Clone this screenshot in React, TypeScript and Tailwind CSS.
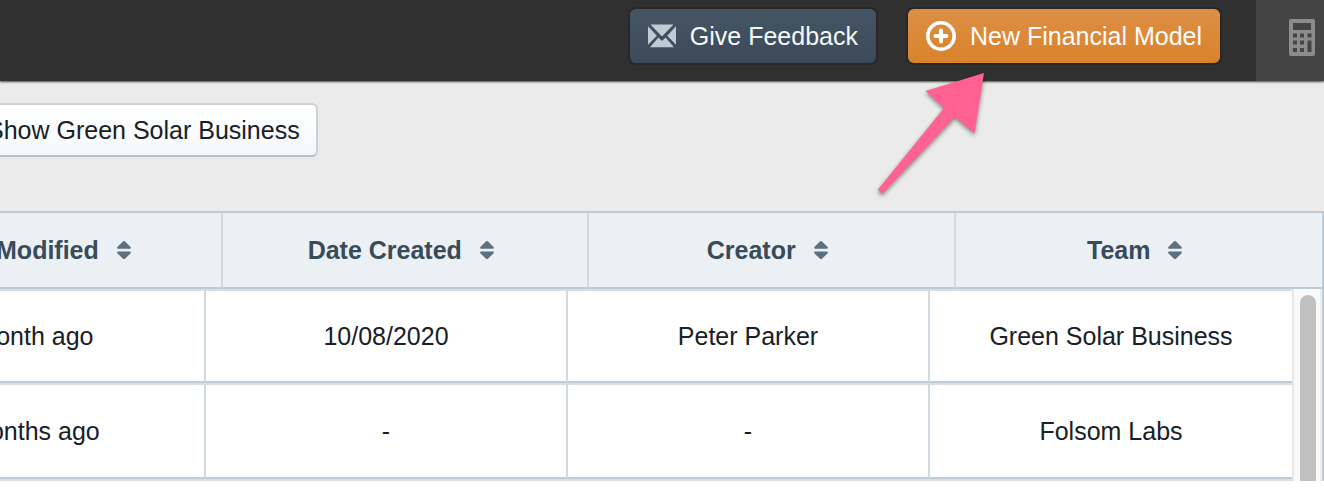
interface Model {
    modified: string;
    created: string;
    creator: string;
    team: string;
}

const columns = ["Last Modified", "Date Created", "Creator", "Team"];

const models: Model[] = [
    { modified: "a month ago", created: "10/08/2020", creator: "Peter Parker", team: "Green Solar Business" },
    { modified: "2 months ago", created: "-", creator: "-", team: "Folsom Labs" },
];

function EnvelopeIcon() {
    return (
        <svg width="28" height="24" viewBox="0 0 28 24" fill="#bfccd6" aria-hidden="true">
            <path d="M2.5 0.5h23L14 12.5z" />
            <path d="M0 2.2L8.8 11.8 0 20.8z" />
            <path d="M28 2.2L19.2 11.8 28 20.8z" />
            <path d="M10.4 13.4L14 17l3.6-3.6 8.4 9.9H2z" />
        </svg>
    );
}

function AddIcon() {
    return (
        <svg width="30" height="30" viewBox="0 0 30 30" fill="none" stroke="#fff" aria-hidden="true">
            <circle cx="15" cy="15" r="13.2" strokeWidth="3.6" />
            <path d="M15 9.5v11M9.5 15h11" strokeWidth="4" strokeLinecap="round" />
        </svg>
    );
}

function CalculatorIcon() {
    return (
        <svg width="26" height="37" viewBox="0 0 26 37" aria-hidden="true">
            <rect width="26" height="37" rx="2" fill="#8c8c8c" />
            <g fill="#444">
                <rect x="4" y="4" width="18" height="7" />
                <rect x="4" y="14.5" width="4" height="4" />
                <rect x="11" y="14.5" width="4" height="4" />
                <rect x="18.5" y="14.5" width="4" height="4" />
                <rect x="4" y="21.5" width="4" height="4" />
                <rect x="11" y="21.5" width="4" height="4" />
                <rect x="18.5" y="21.5" width="4" height="11.5" />
                <rect x="4" y="29" width="4" height="4" />
                <rect x="11" y="29" width="4" height="4" />
            </g>
        </svg>
    );
}

function SortIcon() {
    return (
        <svg width="14" height="18" viewBox="0 0 14 18" fill="#5c7080" aria-hidden="true">
            <path d="M6 0.4a1.6 1.6 0 0 1 2 0l5.4 5.3c0.9 0.9 0.4 2.1-0.8 2.1H1.4C0.2 7.8-0.3 6.6 0.6 5.7z" />
            <path d="M8 17.8a1.6 1.6 0 0 1-2 0L0.6 12.5c-0.9-0.9-0.4-2.1 0.8-2.1h11.2c1.2 0 1.7 1.2 0.8 2.1z" />
        </svg>
    );
}

function PointerArrow() {
    return (
        <svg
            className="pointer-events-none absolute top-[68px] right-[336px] drop-shadow-[0_2px_2px_rgba(0,0,0,0.45)]"
            width="112"
            height="130"
            viewBox="0 0 112 130"
            aria-hidden="true"
        >
            <path d="M108 5L49.5 23 68 40 2 121.5 6 126 79 49 98.5 65.5z" fill="#ff6292" />
        </svg>
    );
}

function TopBar() {
    return (
        <header className="flex h-[81px] items-stretch justify-end bg-[#303030] shadow-[0_1px_2px_rgba(0,0,0,0.7)]">
            <div className="flex items-start gap-8 pt-[9px] pr-9">
                <button
                    type="button"
                    className="flex h-[54px] items-center gap-3.5 rounded-md bg-linear-to-b from-[#455564] to-[#3c4a59] px-[18px] text-[#f5f8fa] shadow-[0_0_0_2px_rgba(16,22,26,0.3)]"
                >
                    <EnvelopeIcon />
                    Give Feedback
                </button>
                <button
                    type="button"
                    className="flex h-[54px] items-center gap-3.5 rounded-md bg-linear-to-b from-[#dd8f45] to-[#d9822b] px-[18px] text-white shadow-[0_0_0_2px_rgba(16,22,26,0.3)]"
                >
                    <AddIcon />
                    New Financial Model
                </button>
            </div>
            <button type="button" aria-label="Calculator" className="flex w-[68px] items-start bg-[#444] pt-[19px] pl-[33px]">
                <CalculatorIcon />
            </button>
        </header>
    );
}

function ModelTable() {
    return (
        <section className="overflow-hidden border-t-2 border-r-2 border-[#bfccd6] bg-white">
            <div className="-ml-36">
                <table className="w-full table-fixed border-separate border-spacing-0 bg-[#ebf0f4] text-[#394b59]">
                    <thead>
                        <tr>
                            {columns.map(column => (
                                <th
                                    key={column}
                                    scope="col"
                                    className="h-[76px] border-r-2 border-b-2 border-r-[#d0dae1] border-b-[#bfccd6] p-0 font-bold last:border-r-0"
                                >
                                    <div className="flex items-center justify-center gap-[18px] pr-2">
                                        {column}
                                        <SortIcon />
                                    </div>
                                </th>
                            ))}
                        </tr>
                    </thead>
                </table>
            </div>
            <div className="-ml-[156px] flex">
                <div className="min-w-0 flex-1 border-b-2 border-[#d5dfe5]">
                    <table className="w-full table-fixed border-separate border-spacing-0 text-center text-[#182026]">
                        <tbody>
                            {models.map(model => (
                                <tr
                                    key={model.team}
                                    className="*:h-24 first:*:h-[94px] *:border-t-2 *:border-r-2 *:border-b-2 *:border-t-[#d5dfe5] *:border-r-[#d0dae1] *:border-b-[#bfccd6] *:p-0 *:last:border-r-0"
                                >
                                    <td>{model.modified}</td>
                                    <td>{model.created}</td>
                                    <td>{model.creator}</td>
                                    <td>{model.team}</td>
                                </tr>
                            ))}
                        </tbody>
                    </table>
                </div>
                <div className="w-[30px] shrink-0 border-r-2 border-l-2 border-r-[#ededed] border-l-[#e7e7e7] bg-[#fafafa] pt-1.5 pr-1 pl-1.5">
                    <div className="h-full rounded-t-full bg-[#c1c1c1]" />
                </div>
            </div>
        </section>
    );
}

export default function App() {
    return (
        <div className="relative min-h-screen overflow-hidden bg-white font-['Liberation_Sans',Arial,sans-serif] text-[25px] leading-[30px]">
            <div className="bg-[#ebebeb]">
                <TopBar />
                <div className="flex pt-[22px] pb-[54px]">
                    <button
                        type="button"
                        className="-ml-[31px] h-[54px] rounded-md border-2 border-[#ccd0d3] border-b-[#b9bec2] bg-linear-to-b from-white to-[#f5f8fa] px-4 text-[#182026]"
                    >
                        Show Green Solar Business
                    </button>
                </div>
            </div>
            <ModelTable />
            <PointerArrow />
        </div>
    );
}
